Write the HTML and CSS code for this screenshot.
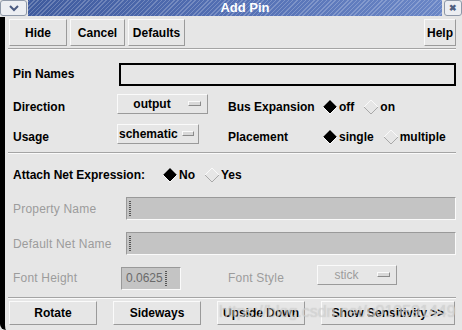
FILE: index.html
```html
<!DOCTYPE html>
<html lang="en">
<head>
    <meta charset="UTF-8">
    <title>Add Pin</title>
    <link rel="stylesheet" href="styles.css">
</head>
<body>
    <div class="window">
        <div class="titlebar">
            <div class="tb-btn tb-menu">
                <svg width="12" height="8" viewBox="0 0 12 8"><path d="M2 2 L6 6 L10 2" fill="none" stroke="#4a5a80" stroke-width="2"/></svg>
            </div>
            <div class="tb-title">Add Pin</div>
            <div class="tb-btn tb-close">&#x2716;</div>
        </div>
        <div class="frame">
            <div class="content">
                <div class="top-buttons">
                    <button class="btn btn-hide">Hide</button>
                    <button class="btn btn-cancel">Cancel</button>
                    <button class="btn btn-defaults">Defaults</button>
                    <button class="btn btn-help">Help</button>
                </div>
                <div class="separator"></div>

                <div class="section">
                    <div class="row row-first">
                        <div class="label">Pin Names</div>
                        <div class="text-input active"></div>
                    </div>
                    <div class="row row-mid">
                        <div class="label">Direction</div>
                        <div class="dropdown dd-direction"><span>output</span><i class="dd-mark"></i></div>
                        <div class="label label-mid">Bus Expansion</div>
                        <div class="radio on"><svg width="16" height="16" viewBox="0 0 16 16"><polygon points="8,1 15,8 8,15 1,8" class="dia"/><polyline points="1,8 8,1 15,8" class="hi"/><polyline points="1,8 8,15 15,8" class="lo"/></svg>off</div>
                        <div class="radio"><svg width="16" height="16" viewBox="0 0 16 16"><polygon points="8,1 15,8 8,15 1,8" class="dia"/><polyline points="1,8 8,1 15,8" class="hi"/><polyline points="1,8 8,15 15,8" class="lo"/></svg>on</div>
                    </div>
                    <div class="row row-mid">
                        <div class="label">Usage</div>
                        <div class="dropdown dd-usage"><span>schematic</span><i class="dd-mark"></i></div>
                        <div class="label label-mid label-place">Placement</div>
                        <div class="radio on"><svg width="16" height="16" viewBox="0 0 16 16"><polygon points="8,1 15,8 8,15 1,8" class="dia"/><polyline points="1,8 8,1 15,8" class="hi"/><polyline points="1,8 8,15 15,8" class="lo"/></svg>single</div>
                        <div class="radio"><svg width="16" height="16" viewBox="0 0 16 16"><polygon points="8,1 15,8 8,15 1,8" class="dia"/><polyline points="1,8 8,1 15,8" class="hi"/><polyline points="1,8 8,15 15,8" class="lo"/></svg>multiple</div>
                    </div>
                </div>
                <div class="separator"></div>

                <div class="section">
                    <div class="row row-attach">
                        <div class="label label-attach">Attach Net Expression:</div>
                        <div class="radio on"><svg width="16" height="16" viewBox="0 0 16 16"><polygon points="8,1 15,8 8,15 1,8" class="dia"/><polyline points="1,8 8,1 15,8" class="hi"/><polyline points="1,8 8,15 15,8" class="lo"/></svg>No</div>
                        <div class="radio"><svg width="16" height="16" viewBox="0 0 16 16"><polygon points="8,1 15,8 8,15 1,8" class="dia"/><polyline points="1,8 8,1 15,8" class="hi"/><polyline points="1,8 8,15 15,8" class="lo"/></svg>Yes</div>
                    </div>
                    <div class="row row-prop">
                        <div class="label disabled label-prop">Property Name</div>
                        <div class="text-input off"><i class="caret"></i></div>
                    </div>
                    <div class="row row-prop">
                        <div class="label disabled label-prop">Default Net Name</div>
                        <div class="text-input off"><i class="caret"></i></div>
                    </div>
                    <div class="row row-font">
                        <div class="label disabled label-fh">Font Height</div>
                        <div class="text-input off font-height">0.0625<i class="caret"></i></div>
                        <div class="label disabled label-fs">Font Style</div>
                        <div class="dropdown dd-style disabled"><span>stick</span><i class="dd-mark"></i></div>
                    </div>
                </div>
                <div class="separator"></div>

                <div class="bottom-buttons">
                    <button class="btn btn-wide">Rotate</button>
                    <button class="btn btn-wide">Sideways</button>
                    <button class="btn btn-wide">Upside Down</button>
                    <button class="btn btn-show">Show Sensitivity &gt;&gt;</button>
                    <div class="watermark">https://blog.csdn.net/u010591449</div>
                </div>
            </div>
        </div>
    </div>
</body>
</html>
```

FILE: styles.css
```css
body {
    margin: 0;
    background-color: #e6e6e6;
    font-family: "Liberation Sans", Arial, sans-serif;
    font-size: 12px;
    font-weight: bold;
    color: #000;
}
.window {
    width: 462px;
    height: 330px;
    display: flex;
    flex-direction: column;
    overflow: hidden;
}
.titlebar {
    height: 17px;
    display: flex;
    background-color: #e6e6e6;
}
.tb-btn {
    box-sizing: border-box;
    height: 16px;
    border: 1px solid #8e98a8;
    border-radius: 3px;
    background-color: #eceef2;
    display: flex;
    align-items: center;
    justify-content: center;
}
.tb-menu {
    width: 27px;
}
.tb-close {
    width: 18px;
    margin-left: 2px;
    font-size: 9px;
    color: #506080;
}
.tb-title {
    flex: 1;
    height: 16px;
    margin-left: 1px;
    color: #fff;
    font-size: 13px;
    line-height: 16px;
    text-align: center;
    text-indent: 20px;
    background:
        repeating-linear-gradient(-45deg, rgba(255,255,255,0) 0 2px, rgba(255,255,255,0.22) 2px 3px),
        linear-gradient(to right, #3f5b9e, #5470b4 50%, #6a86c6);
}
.frame {
    flex: 1;
    display: flex;
    border-left: 5px solid #000;
    border-bottom-left-radius: 6px;
    background-color: #e6e6e6;
}
.content {
    flex: 1;
    padding: 2px 6px 0 4px;
    display: flex;
    flex-direction: column;
}
.btn {
    box-sizing: border-box;
    font-family: inherit;
    font-size: 12px;
    font-weight: bold;
    color: #000;
    background-color: #e6e6e6;
    border: 1px solid;
    border-color: #fafafa #9a9a9a #9a9a9a #fafafa;
    padding: 0;
    height: 27px;
}
.top-buttons {
    display: flex;
    gap: 3px;
}
.btn-hide { width: 58px; }
.btn-cancel { width: 55px; }
.btn-defaults { width: 57px; }
.btn-help {
    width: 32px;
    margin-left: auto;
}
.separator {
    height: 1px;
    border-top: 1px solid #a4a4a4;
    background-color: #fafafa;
    margin: 2px 0 0 -1px;
}
.section {
    display: flex;
    flex-direction: column;
    padding: 8px 0 0 4px;
}
.row {
    display: flex;
    align-items: center;
    height: 30px;
}
.row-first {
    height: 32px;
}
.row-mid .label,
.row-mid .radio {
    padding-top: 4px;
}
.label {
    width: 104px;
    flex-shrink: 0;
}
.label.disabled {
    color: #9c9c9c;
    font-weight: normal;
    letter-spacing: 0.2px;
}
.text-input {
    box-sizing: border-box;
    flex: 1;
    height: 23px;
    display: flex;
    align-items: center;
}
.text-input.active {
    margin-left: 2px;
    border: 2px solid #000;
    background-color: #e6e6e6;
}
.text-input.off {
    border-top: 1px solid #999;
    border-left: 1px solid #999;
    border-right: 1px solid #fafafa;
    border-bottom: 1px solid #fafafa;
    background-color: #c4c4c4;
}
.caret {
    display: inline-block;
    width: 2px;
    height: 15px;
    margin-left: 2px;
    border-left: 1px dotted #555;
    border-right: 1px dotted #555;
    box-sizing: border-box;
}
.dropdown {
    box-sizing: border-box;
    height: 20px;
    border: 1px solid;
    border-color: #fafafa #9a9a9a #9a9a9a #fafafa;
    display: flex;
    align-items: center;
    padding: 0 6px 0 2px;
    margin-top: -3px;
}
.dropdown span {
    flex: 1;
    text-align: center;
}
.dd-mark {
    width: 11px;
    height: 3px;
    border: 1px solid;
    border-color: #fafafa #8a8a8a #8a8a8a #fafafa;
    background-color: #d8d8d8;
    margin-left: 4px;
}
.dd-direction {
    width: 91px;
}
.dd-usage {
    width: 82px;
    padding-left: 1px;
    padding-right: 4px;
}
.dd-usage span { text-align: left; }
.label-mid {
    width: 94px;
    margin-left: 20px;
}
.label-place { margin-left: 29px; }
.radio {
    display: flex;
    align-items: center;
    margin-right: 9px;
}
.radio svg {
    margin-right: 1px;
}
.dia {
    fill: #e6e6e6;
    stroke: none;
}
.hi {
    fill: none;
    stroke: #fafafa;
    stroke-width: 1;
}
.lo {
    fill: none;
    stroke: #a8a8a8;
    stroke-width: 1;
}
.radio.on .dia {
    fill: #000;
}
.radio.on .hi {
    stroke: #7a7a7a;
}
.radio.on .lo {
    stroke: #fafafa;
}
.label-attach {
    width: 149px;
}
.row-attach {
    height: 33px;
    margin-top: -4px;
}
.row-prop {
    height: 35px;
}
.label-prop { width: 113px; }
.label-fh { width: 108px; }
.font-height {
    flex: none;
    width: 60px;
    padding-left: 4px;
    font-weight: normal;
    color: #6a6a6a;
}
.label-fs {
    width: 89px;
    margin-left: 47px;
}
.dd-style {
    width: 80px;
    margin-top: -7px;
    color: #9c9c9c;
    font-weight: normal;
}
.row-font {
    height: 34px;
}
.bottom-buttons {
    display: flex;
    gap: 16px;
    margin-top: 2px;
    position: relative;
}
.btn-wide {
    width: 88px;
    height: 24px;
}
.btn-show {
    width: 134px;
    height: 24px;
}
.watermark {
    position: absolute;
    left: 210px;
    top: 2px;
    font-size: 16px;
    font-weight: normal;
    color: rgba(225, 225, 225, 0.6);
    text-shadow: 0 0 1px rgba(150,150,150,0.5);
    pointer-events: none;
}
```
